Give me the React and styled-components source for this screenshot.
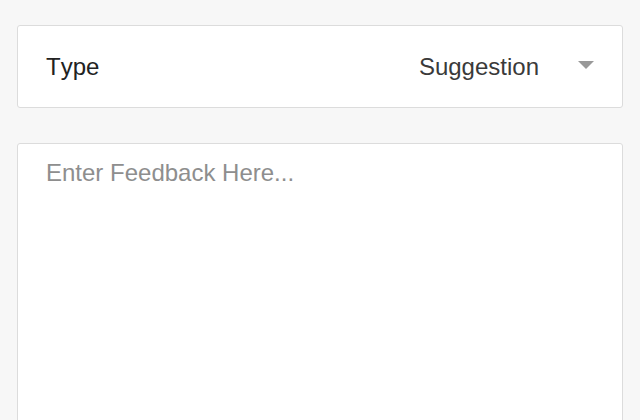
import React from "react";
import styled, { createGlobalStyle } from "styled-components";

const Global = createGlobalStyle`
  html, body { margin: 0; padding: 0; background: #f7f7f7; }
  body { font-family: "Liberation Sans", Arial, sans-serif; }
  * { box-sizing: border-box; }
`;

const Page = styled.div`
  display: flex;
  flex-direction: column;
  gap: 35px;
  padding: 25px 17px 0 17px;
  height: 420px;
  overflow: hidden;
`;

const Card = styled.div`
  background: #fff;
  border: 1px solid #dcdcdc;
  border-radius: 3px;
`;

const SelectRow = styled(Card)`
  flex-shrink: 0;
  height: 83px;
  display: flex;
  align-items: center;
  padding: 1px 28px 0 28px;
`;

const Label = styled.span`
  font-size: 24px;
  color: #222;
  flex: 1;
  font-kerning: none;
`;

const Value = styled.span`
  font-size: 24px;
  color: #3a3a3a;
  margin-right: 39px;
`;

const Caret = styled.span`
  width: 0;
  height: 0;
  border-left: 8px solid transparent;
  border-right: 8px solid transparent;
  border-top: 8px solid #999;
  margin-top: -5px;
`;

const TextArea = styled.textarea`
  display: block;
  flex-shrink: 0;
  width: 100%;
  height: 320px;
  background: #fff;
  border: 1px solid #dcdcdc;
  border-radius: 3px;
  padding: 15px 28px;
  font-family: "Liberation Sans", Arial, sans-serif;
  font-size: 24px;
  line-height: 28px;
  color: #333;
  resize: none;
  outline: none;
  &::placeholder { color: #8e8e8e; }
`;

export default function App() {
  return (
    <>
      <Global />
      <Page>
        <SelectRow>
          <Label>Type</Label>
          <Value>Suggestion</Value>
          <Caret />
        </SelectRow>
        <TextArea placeholder="Enter Feedback Here..." />
      </Page>
    </>
  );
}
